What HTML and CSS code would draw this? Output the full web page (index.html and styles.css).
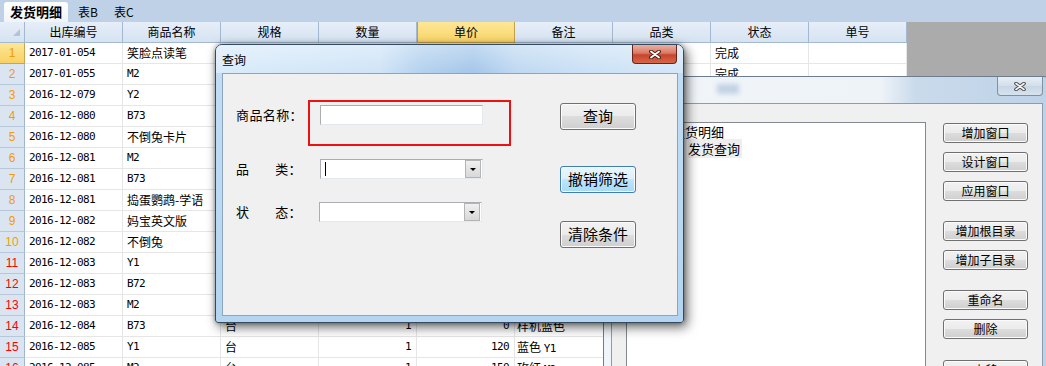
FILE: index.html
```
<!DOCTYPE html>
<html lang="zh">
<head>
<meta charset="utf-8">
<link rel="stylesheet" href="styles.css">
</head>
<body>
<div class="app">
  <div class="tabs">
    <div class="tab active">发货明细</div>
    <div class="tab first">表B</div>
    <div class="tab">表C</div>
  </div>
  <div class="sheet">
    <div class="grid">
      <div class="hc corner"><span class="tri"></span></div>
      <div class="hc">出库编号</div>
      <div class="hc">商品名称</div>
      <div class="hc">规格</div>
      <div class="hc">数量</div>
      <div class="hc sel">单价</div>
      <div class="hc">备注</div>
      <div class="hc">品类</div>
      <div class="hc">状态</div>
      <div class="hc">单号</div>

      <div class="rh sel">1</div><div class="c m">2017-01-054</div><div class="c">笑脸点读笔</div><div class="c">台</div><div class="c n">1</div><div class="c n">98</div><div class="c nt"></div><div class="c"></div><div class="c">完成</div><div class="c"></div>
      <div class="rh">2</div><div class="c m">2017-01-055</div><div class="c m">M2</div><div class="c">台</div><div class="c n">1</div><div class="c n">150</div><div class="c nt"></div><div class="c"></div><div class="c">完成</div><div class="c"></div>
      <div class="rh">3</div><div class="c m">2016-12-079</div><div class="c m">Y2</div><div class="c">台</div><div class="c n">1</div><div class="c n">120</div><div class="c nt"></div><div class="c"></div><div class="c">完成</div><div class="c"></div>
      <div class="rh">4</div><div class="c m">2016-12-080</div><div class="c m">B73</div><div class="c">台</div><div class="c n">1</div><div class="c n">0</div><div class="c nt"></div><div class="c"></div><div class="c">完成</div><div class="c"></div>
      <div class="rh">5</div><div class="c m">2016-12-080</div><div class="c">不倒兔卡片</div><div class="c">套</div><div class="c n">1</div><div class="c n">0</div><div class="c nt"></div><div class="c"></div><div class="c">完成</div><div class="c"></div>
      <div class="rh">6</div><div class="c m">2016-12-081</div><div class="c m">M2</div><div class="c">台</div><div class="c n">1</div><div class="c n">150</div><div class="c nt"></div><div class="c"></div><div class="c">完成</div><div class="c"></div>
      <div class="rh">7</div><div class="c m">2016-12-081</div><div class="c m">B73</div><div class="c">台</div><div class="c n">1</div><div class="c n">0</div><div class="c nt"></div><div class="c"></div><div class="c">完成</div><div class="c"></div>
      <div class="rh">8</div><div class="c m">2016-12-081</div><div class="c">捣蛋鹦鹉-学语</div><div class="c">台</div><div class="c n">1</div><div class="c n">0</div><div class="c nt"></div><div class="c"></div><div class="c">完成</div><div class="c"></div>
      <div class="rh">9</div><div class="c m">2016-12-082</div><div class="c">妈宝英文版</div><div class="c">台</div><div class="c n">1</div><div class="c n">0</div><div class="c nt"></div><div class="c"></div><div class="c">完成</div><div class="c"></div>
      <div class="rh">10</div><div class="c m">2016-12-082</div><div class="c">不倒兔</div><div class="c">台</div><div class="c n">1</div><div class="c n">0</div><div class="c nt"></div><div class="c"></div><div class="c">完成</div><div class="c"></div>
      <div class="rh red">11</div><div class="c m">2016-12-083</div><div class="c m">Y1</div><div class="c">台</div><div class="c n">1</div><div class="c n">120</div><div class="c nt"></div><div class="c"></div><div class="c">完成</div><div class="c"></div>
      <div class="rh red">12</div><div class="c m">2016-12-083</div><div class="c m">B72</div><div class="c">台</div><div class="c n">1</div><div class="c n">0</div><div class="c nt"></div><div class="c"></div><div class="c">完成</div><div class="c"></div>
      <div class="rh red">13</div><div class="c m">2016-12-083</div><div class="c m">M2</div><div class="c">台</div><div class="c n">1</div><div class="c n">150</div><div class="c nt"></div><div class="c"></div><div class="c">完成</div><div class="c"></div>
      <div class="rh red">14</div><div class="c m">2016-12-084</div><div class="c m">B73</div><div class="c">台</div><div class="c n">1</div><div class="c n">0</div><div class="c nt">样机蓝色</div><div class="c"></div><div class="c">完成</div><div class="c"></div>
      <div class="rh red">15</div><div class="c m">2016-12-085</div><div class="c m">Y1</div><div class="c">台</div><div class="c n">1</div><div class="c n">120</div><div class="c nt">蓝色 <span class="mi">Y1</span></div><div class="c"></div><div class="c">完成</div><div class="c"></div>
      <div class="rh red">16</div><div class="c m">2016-12-085</div><div class="c m">M2</div><div class="c">台</div><div class="c n">1</div><div class="c n">150</div><div class="c nt">玫红 <span class="mi">M2</span></div><div class="c"></div><div class="c">完成</div><div class="c"></div>
    </div>
    <div class="filler"></div>
  </div>

  <div class="win side">
    <div class="stb">
      <span class="ghost"></span>
      <span class="xbtn grey">
        <svg width="12" height="9" viewBox="0 0 12 9"><path d="M2 1.5 L10 7.5 M10 1.5 L2 7.5" stroke="#4d4d4d" stroke-width="3.6" stroke-linecap="round"/><path d="M2 1.5 L10 7.5 M10 1.5 L2 7.5" stroke="#f4f4f4" stroke-width="1.6" stroke-linecap="round"/></svg>
      </span>
    </div>
    <div class="sclient">
      <div class="list">
        <div class="ti root">发货明细</div>
        <div class="ti child"><span class="hlit">发货查询</span></div>
      </div>
      <div class="sbtns">
        <div class="sb">增加窗口</div>
        <div class="sb g9">设计窗口</div>
        <div class="sb g9">应用窗口</div>
        <div class="sb g20">增加根目录</div>
        <div class="sb g9">增加子目录</div>
        <div class="sb g20">重命名</div>
        <div class="sb g9">删除</div>
        <div class="sb g21">上移</div>
      </div>
    </div>
  </div>

  <div class="win dlg">
    <div class="dtb">
      <span class="ttl">查询</span>
      <span class="xbtn red">
        <svg width="12" height="9" viewBox="0 0 12 9"><path d="M2 1.5 L10 7.5 M10 1.5 L2 7.5" stroke="#4a2018" stroke-width="3.8" stroke-linecap="round"/><path d="M2 1.5 L10 7.5 M10 1.5 L2 7.5" stroke="#ffffff" stroke-width="1.8" stroke-linecap="round"/></svg>
      </span>
    </div>
    <div class="dclient">
      <div class="form">
        <div class="row r1">
          <div class="lbl">商品名称：</div>
          <div class="hl"><div class="inp"></div></div>
        </div>
        <div class="row r2">
          <div class="lbl sp"><span>品</span><span>类：</span></div>
          <div class="combo"><span class="caret"></span><span class="dd"><span class="arr"></span></span></div>
        </div>
        <div class="row r3">
          <div class="lbl sp"><span>状</span><span>态：</span></div>
          <div class="combo"><span></span><span class="dd"><span class="arr"></span></span></div>
        </div>
      </div>
      <div class="btns">
        <div class="btn">查询</div>
        <div class="btn hov g36">撤销筛选</div>
        <div class="btn g28">清除条件</div>
      </div>
    </div>
  </div>
</div>
</body>
</html>
```
FILE: styles.css
```
* { box-sizing: border-box; }
body {
  margin: 0;
  width: 1046px;
  height: 366px;
  overflow: hidden;
  font-family: "Noto Sans CJK SC", "Liberation Sans", sans-serif;
  font-size: 12px;
  color: #000;
}
.app {
  position: relative;
  width: 1046px;
  height: 366px;
  overflow: hidden;
  background: #ababab;
}

/* tabs */
.tabs {
  height: 22px;
  background: #bfd1e6;
  display: flex;
  align-items: flex-end;
  padding-left: 4px;
}
.tab {
  height: 20px;
  line-height: 20px;
  padding: 0 8px;
  font-size: 12px;
}
.tab.first { margin-left: 2px; }
.tab.active {
  width: 64px;
  padding: 0 0 0 6px;
  font-size: 13px;
  font-weight: bold;
  background: linear-gradient(#ffffff, #eef4fb);
  border-radius: 3px 3px 0 0;
}

/* sheet */
.sheet {
  display: flex;
  height: 344px;
}
.filler { flex: 1; background: #ababab; }
.grid {
  display: grid;
  grid-template-columns: 25px repeat(9, 98px);
  grid-auto-rows: 21px;
  width: 907px;
  background: #fff;
  align-content: start;
}
.hc {
  border-right: 1px solid #a4b8cf;
  border-bottom: 1px solid #a4b8cf;
  background: linear-gradient(#e6eef8, #d6e3f2);
  text-align: center;
  line-height: 20px;
  font-size: 12px;
  white-space: nowrap;
}
.hc.sel {
  background: linear-gradient(#fde796, #f9d468);
  border-color: #c3a04b;
  border-left: 1px solid #c3a04b;
}
.hc.corner {
  display: flex;
  justify-content: flex-end;
  align-items: flex-end;
  padding: 0 4px 6px 0;
}
.tri {
  width: 0;
  height: 0;
  border-left: 7px solid transparent;
  border-bottom: 7px solid #b3c3d6;
}
.rh {
  border-right: 1px solid #9eb6ce;
  border-bottom: 1px solid #b7c7da;
  background: #dbe5f2;
  color: #f29c00;
  text-align: center;
  line-height: 20px;
  font-family: "Liberation Sans", sans-serif;
  font-size: 12px;
}
.rh.red { color: #f00; }
.rh.sel { background: linear-gradient(#fde796, #f8d163); border-bottom-color: #c8a54e; border-right-color: #c8a54e; }
.c {
  border-right: 1px solid #e6e6e6;
  border-bottom: 1px solid #e6e6e6;
  padding: 0 4px;
  line-height: 20px;
  white-space: nowrap;
  overflow: hidden;
  font-size: 12px;
}
.c.m, .mi {
  font-family: "DejaVu Sans Mono", monospace;
  font-size: 11px;
  letter-spacing: -0.62px;
}
.c.n {
  text-align: right;
  padding-right: 5px;
  font-family: "DejaVu Sans Mono", monospace;
  font-size: 11px;
  letter-spacing: -0.62px;
}
.c.nt { padding-left: 2px; }

/* windows */
.win { position: absolute; }

/* right window */
.side {
  left: 603px;
  top: 76px;
  width: 448px;
  height: 310px;
  border: 1px solid #6e7d8e;
  border-radius: 7px 7px 0 0;
  background: linear-gradient(to right, #f1f5f9 0%, #eef3f8 62%, #c9daeb 70%, #bed2e7 100%);
  padding: 0 7px;
  display: flex;
  flex-direction: column;
}
.stb {
  height: 26px;
  display: flex;
  align-items: flex-start;
}
.ghost {
  margin: 7px 0 0 106px;
  width: 22px;
  height: 10px;
  background: #6f93c0;
  opacity: 0.35;
  filter: blur(2.5px);
}
.xbtn {
  margin-left: auto;
  width: 46px;
  height: 19px;
  display: flex;
  align-items: center;
  justify-content: center;
  border-radius: 0 0 4px 4px;
}
.xbtn.grey {
  border: 1px solid #7f90a3;
  border-top: none;
  background: linear-gradient(#e7eef6, #d3deea 50%, #c8d6e5 50%, #d6e2ee);
}
.xbtn.red {
  width: 45px;
  margin-right: 1px;
  border: 1px solid #6b2419;
  border-top: none;
  background: linear-gradient(#eab0a2 0%, #da7a64 45%, #c8452c 55%, #d6664a 100%);
}
.sclient {
  flex: 1;
  background: #f0f0f0;
  border: 1px solid #8d9cad;
  display: flex;
  padding: 18px 0 0 14px;
}
.list {
  width: 300px;
  height: 260px;
  background: #fff;
  border: 1px solid #828790;
  font-size: 13px;
  line-height: 17px;
}
.ti.root { padding-left: 45px; }
.ti.child { padding-left: 61px; }
.hlit { background: #eeeeee; padding-right: 2px; }
.sbtns {
  margin-left: 17px;
  padding-top: 1px;
  display: flex;
  flex-direction: column;
}
.sb {
  width: 85px;
  height: 20px;
  border: 1px solid #707070;
  border-radius: 3px;
  background: linear-gradient(#f2f2f2 0%, #ebebeb 50%, #dddddd 50%, #cfcfcf 100%);
  box-shadow: inset 0 0 0 1px #fbfbfb;
  text-align: center;
  line-height: 18px;
  font-size: 12px;
  flex: none;
}
.sb.g9 { margin-top: 9px; }
.sb.g20 { margin-top: 20px; }
.sb.g21 { margin-top: 21px; }

/* dialog */
.dlg {
  left: 215px;
  top: 44px;
  width: 469px;
  height: 279px;
  border: 1px solid #364a5f;
  border-radius: 7px 7px 3px 3px;
  background: linear-gradient(#c3def5, #b3d5f1);
  padding: 0 5px 6px 6px;
  display: flex;
  flex-direction: column;
  box-shadow: 3px 4px 12px rgba(0, 0, 0, 0.6), 0 0 4px rgba(0, 0, 0, 0.35);
}
.dtb {
  height: 28px;
  display: flex;
  align-items: flex-start;
  margin: 0 -5px 0 -6px;
  padding: 0 5px 0 6px;
  border-radius: 6px 6px 0 0;
  background:
    linear-gradient(rgba(255,255,255,0.35), rgba(255,255,255,0)),
    linear-gradient(to right, #d9ebfa 0%, #cfe4f7 35%, #b3d1ee 44%, #a3c6ea 55%, #bdd8f1 64%, #cbe1f6 80%, #d3e7f8 100%);
}
.ttl {
  padding-top: 7px;
  font-size: 12px;
  line-height: 16px;
}
.dclient {
  flex: 1;
  background: #f0f0f0;
  border: 1px solid #8ea4bb;
  display: flex;
}
.form {
  width: 337px;
  padding-left: 13px;
  display: flex;
  flex-direction: column;
}
.row { display: flex; align-items: flex-start; }
.r1 { margin-top: 26px; }
.r2 { margin-top: 13px; }
.r3 { margin-top: 23px; }
.lbl {
  width: 66px;
  line-height: 20px;
  font-size: 13px;
  letter-spacing: 0.4px;
  white-space: nowrap;
}
.r1 .lbl { margin-top: 5px; }
.lbl.sp { display: flex; justify-content: space-between; }
.hl {
  margin-left: 6px;
  border: 2px solid #ee1111;
  padding: 3px 26px 19px 10px;
}
.inp {
  width: 163px;
  height: 20px;
  background: #fff;
  border: 1px solid;
  border-color: #abadb3 #e3e9ef #e3e9ef #abadb3;
}
.combo {
  width: 163px;
  height: 20px;
  margin-left: 18px;
  background: #fff;
  border: 1px solid;
  border-color: #abadb3 #e3e9ef #e3e9ef #abadb3;
  display: flex;
  justify-content: space-between;
  align-items: center;
  padding: 0 1px 0 4px;
}
.r3 .combo { margin-left: 17px; }
.caret { width: 1px; height: 14px; background: #000; }
.dd {
  width: 16px;
  height: 18px;
  background: linear-gradient(#f0f0f0, #d8d8d8);
  border: 1px solid #b4b4b4;
  display: flex;
  align-items: center;
  justify-content: center;
}
.arr {
  width: 0;
  height: 0;
  border-left: 3px solid transparent;
  border-right: 3px solid transparent;
  border-top: 3px solid #000;
}
.btns {
  display: flex;
  flex-direction: column;
  padding-top: 29px;
}
.btn {
  width: 76px;
  height: 27px;
  border: 1px solid #707070;
  border-radius: 3px;
  background: linear-gradient(#f2f2f2 0%, #ebebeb 50%, #dddddd 50%, #cfcfcf 100%);
  box-shadow: inset 0 0 0 1px #fbfbfb;
  text-align: center;
  line-height: 24px;
  font-size: 15px;
  flex: none;
}
.btn.hov {
  border-color: #3c7fb1;
  background: linear-gradient(#eaf6fd 0%, #d9f0fc 50%, #bee6fd 50%, #a7d9f5 100%);
}
.btn.g36 { margin-top: 36px; }
.btn.g28 { margin-top: 28px; }
```
